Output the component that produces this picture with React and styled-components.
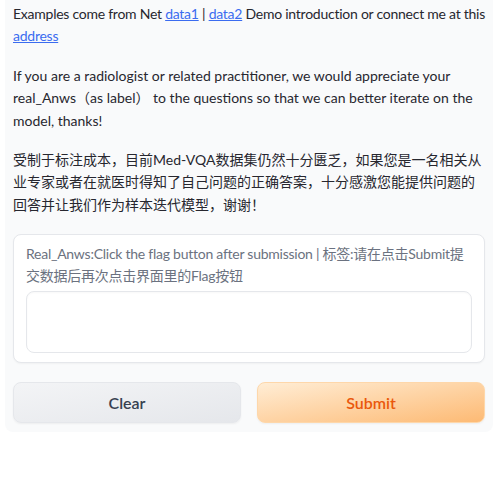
import React from "react";
import styled, { createGlobalStyle } from "styled-components";

const GlobalStyle = createGlobalStyle`
  html, body {
    margin: 0;
    padding: 0;
    background: #ffffff;
  }
  body {
    font-family: Lato, "Noto Sans CJK SC", sans-serif;
  }
`;

const Panel = styled.div`
  width: 488px;
  margin-left: 5px;
  box-sizing: border-box;
  padding: 3px 8px 9px;
  background-color: #f9fafb;
  border-radius: 0 0 8px 8px;
`;

const Prose = styled.p`
  margin: 0 0 17px;
  font-size: 14px;
  line-height: 22.4px;
  letter-spacing: ${(p) => (p.$tight ? "-0.25px" : "0")};
  color: #27272f;

  &:last-of-type {
    margin-bottom: 18px;
  }
`;

const Link = styled.a`
  color: #3b6cf0;
  text-decoration: underline;
`;

const Block = styled.div`
  background: #ffffff;
  border: 1px solid #e5e7eb;
  border-radius: 8px;
  padding: 8px 12px 9px;
  box-shadow: 0 1px 2px rgba(0, 0, 0, 0.04);
`;

const Label = styled.span`
  display: block;
  margin-bottom: 4px;
  font-size: 14px;
  line-height: 22px;
  letter-spacing: -0.25px;
  color: #6b7280;
`;

const TextArea = styled.textarea`
  display: block;
  width: 100%;
  height: 62px;
  box-sizing: border-box;
  resize: none;
  border: 1px solid #e5e7eb;
  border-radius: 8px;
  background: #ffffff;
  box-shadow: inset 0 1px 2px rgba(0, 0, 0, 0.03);
  padding: 8px 10px;
  font: inherit;
  outline: none;
`;

const ButtonRow = styled.div`
  display: grid;
  grid-template-columns: 1fr 1fr;
  gap: 16px;
  margin-top: 19px;
`;

const Button = styled.button`
  height: 41px;
  border-radius: 8px;
  font-family: Lato, "Noto Sans CJK SC", sans-serif;
  font-size: 16px;
  font-weight: 600;
  cursor: pointer;
  box-shadow: 0 1px 2px rgba(0, 0, 0, 0.05);
  border: 1px solid ${(p) => (p.$primary ? "#fed7aa" : "#e5e7eb")};
  color: ${(p) => (p.$primary ? "#ea580c" : "#374151")};
  background: ${(p) =>
    p.$primary
      ? "linear-gradient(to bottom right, #ffedd5, #fdba74)"
      : "linear-gradient(to bottom right, #f3f4f6, #e5e7eb)"};
`;

export default function App() {
  return (
    <>
      <GlobalStyle />
      <Panel>
        <Prose $tight>
          Examples come from Net <Link href="#">data1</Link> |{" "}
          <Link href="#">data2</Link> Demo introduction or connect me at this{" "}
          <Link href="#">address</Link>
        </Prose>
        <Prose>
          If you are a radiologist or related practitioner, we would appreciate
          your real_Anws（as label） to the questions so that we can better
          iterate on the model, thanks!
        </Prose>
        <Prose>
          受制于标注成本，目前Med-VQA数据集仍然十分匮乏，如果您是一名相关从业专家或者在就医时得知了自己问题的正确答案，十分感激您能提供问题的回答并让我们作为样本迭代模型，谢谢！
        </Prose>
        <Block>
          <Label>
            Real_Anws:Click the flag button after submission | 标签:请在点击Submit提交数据后再次点击界面里的Flag按钮
          </Label>
          <TextArea rows={2} />
        </Block>
        <ButtonRow>
          <Button>Clear</Button>
          <Button $primary>Submit</Button>
        </ButtonRow>
      </Panel>
    </>
  );
}
